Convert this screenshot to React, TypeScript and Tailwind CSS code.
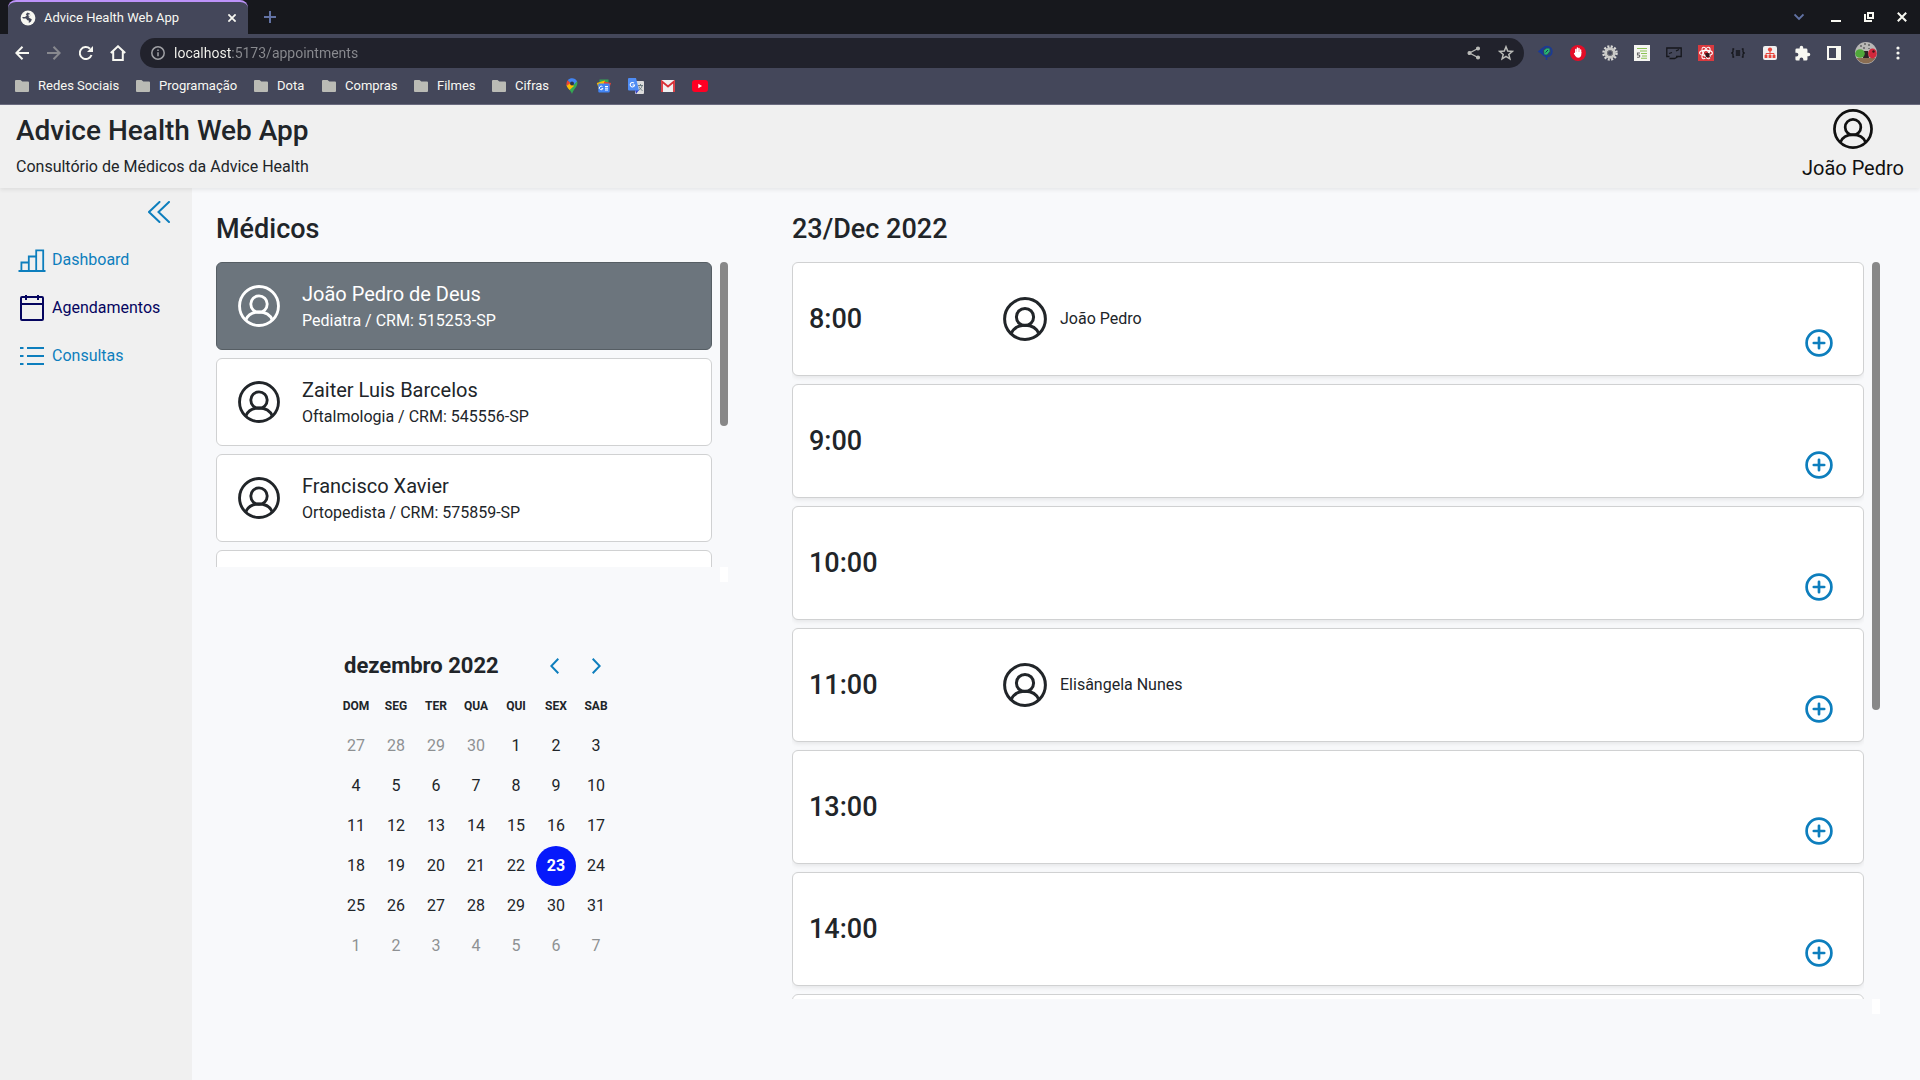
import React from "react";

type SvgProps = { className?: string };

function UserIcon({ className }: SvgProps) {
  return (
    <svg viewBox="0 0 44 44" fill="none" stroke="currentColor" strokeWidth="3" className={className} aria-hidden="true">
      <circle cx="22" cy="22" r="20.4" />
      <circle cx="22" cy="20" r="8.6" />
      <path d="M8 36.8C10.2 31.4 15.6 28.3 22 28.3s11.8 3.1 14 8.5" />
    </svg>
  );
}

function PlusCircleIcon({ className }: SvgProps) {
  return (
    <svg viewBox="0 0 28 28" fill="none" stroke="currentColor" strokeWidth="2.7" strokeLinecap="round" className={className} aria-hidden="true">
      <circle cx="14" cy="14" r="12.4" />
      <path d="M14 8.8v10.4M8.8 14h10.4" />
    </svg>
  );
}

function BarsIcon() {
  return (
    <svg viewBox="0 0 28 28" width="28" height="28" fill="none" stroke="currentColor" strokeWidth="1.8" aria-hidden="true">
      <path d="M.5 25h27M3.4 25v-8.5h7.4M10.8 25V10.5h7.400M18.2 25V4.4h7V25" />
    </svg>
  );
}

function CalendarIcon() {
  return (
    <svg viewBox="0 0 28 28" width="28" height="28" fill="none" stroke="currentColor" strokeWidth="2" aria-hidden="true">
      <rect x="3" y="3" width="22" height="23" rx="1" />
      <path d="M3 10h22M8 1v5M20 1v5" />
    </svg>
  );
}

function ListIcon() {
  return (
    <svg viewBox="0 0 28 28" width="28" height="28" fill="none" stroke="currentColor" strokeWidth="2" aria-hidden="true">
      <path d="M2 6h3.500M9 6h17M2 14h3.500M9 14h17M2 22h3.500M9 22h17" />
    </svg>
  );
}

function Folder() {
  return (
    <svg viewBox="0 0 14 12" width="14" height="12" fill="#babbb5" aria-hidden="true">
      <path d="M1 0h4.500l1.800 1.600H13a1 1 0 0 1 1 1V11a1 1 0 0 1-1 1H1a1 1 0 0 1-1-1V1a1 1 0 0 1 1-1z" />
    </svg>
  );
}

function ChromeIcon({ label, children }: { label: string; children: React.ReactNode }) {
  return (
    <button type="button" aria-label={label} className="flex size-8 items-center justify-center">
      {children}
    </button>
  );
}

function TabStrip() {
  return (
    <div className="flex h-[34px] items-stretch bg-[#17181d] px-2">
      <div className="flex w-60 items-center rounded-t-lg border-t-2 border-[#bd93f9] bg-[#44475a] pl-3 pr-2">
        <svg viewBox="0 0 16 16" width="16" height="16" className="shrink-0" aria-hidden="true">
          <circle cx="8" cy="8" r="7.4" fill="#f8f8f2" />
          <path d="M7.500 2.500 5.800 4.200 6.800 5.400 5 7H2.200l.8 1.500h3l1.300 1.800 1.500.3V13l2.200-1.500.8-2.300L9.500 8l-1-1 2-1.200L9.800 3.500z" fill="#44475a" />
          <path d="M8.500 4.300h2.200v2H8.500z" fill="#f8f8f2" />
        </svg>
        <span className="grow pl-2 text-[13px] text-[#f8f8f2]">Advice Health Web App</span>
        <button type="button" aria-label="Fechar aba" className="flex size-4 items-center justify-center text-[#f8f8f2]">
          <svg viewBox="0 0 8 8" width="8" height="8" stroke="currentColor" strokeWidth="1.8" aria-hidden="true">
            <path d="m.4.4 7.200 7.200M7.600.4.4 7.600" />
          </svg>
        </button>
      </div>
      <button type="button" aria-label="Nova aba" className="ml-4 text-[#6272a4]">
        <svg viewBox="0 0 12 12" width="12" height="12" stroke="currentColor" strokeWidth="2" aria-hidden="true">
          <path d="M6 0v12M0 6h12" />
        </svg>
      </button>
      <div className="ml-auto flex items-center gap-[23px] text-[#f8f8f2]">
        <button type="button" aria-label="Pesquisar abas" className="text-[#6272a4]">
          <svg viewBox="0 0 10 10" width="10" height="10" fill="none" stroke="currentColor" strokeWidth="1.8" aria-hidden="true">
            <path d="m.5 2.500 4.500 4.500 4.500-4.500" />
          </svg>
        </button>
        <button type="button" aria-label="Minimizar" className="pl-1">
          <svg viewBox="0 0 10 10" width="10" height="10" aria-hidden="true">
            <path d="M0 8h10v2H0z" fill="currentColor" />
          </svg>
        </button>
        <button type="button" aria-label="Restaurar">
          <svg viewBox="0 0 10 10" width="10" height="10" fill="none" stroke="currentColor" strokeWidth="2" aria-hidden="true">
            <path d="M4 1h5v5H4zM1 2v7h7" />
          </svg>
        </button>
        <button type="button" aria-label="Fechar janela" className="pr-[5px]">
          <svg viewBox="0 0 10 10" width="10" height="10" stroke="currentColor" strokeWidth="2" aria-hidden="true">
            <path d="m.8.8 8.400 8.400M9.200.8.8 9.200" />
          </svg>
        </button>
      </div>
    </div>
  );
}

function Toolbar() {
  return (
    <div className="flex h-[38px] items-center px-[6px] text-[#f8f8f2]">
      <ChromeIcon label="Voltar">
        <svg viewBox="0 0 14 14" width="14" height="14" fill="none" stroke="currentColor" strokeWidth="2" aria-hidden="true">
          <path d="M14 7H1.500M7.500.7 1.300 7l6.200 6.300" />
        </svg>
      </ChromeIcon>
      <ChromeIcon label="Avançar">
        <svg viewBox="0 0 14 14" width="14" height="14" fill="none" stroke="#88898f" strokeWidth="2" aria-hidden="true">
          <path d="M0 7h12.500M6.500.7 12.700 7l-6.200 6.300" />
        </svg>
      </ChromeIcon>
      <ChromeIcon label="Recarregar">
        <svg viewBox="0 0 14 14" width="14" height="14" fill="none" stroke="currentColor" strokeWidth="2" aria-hidden="true">
          <path d="M12.500 9A6 6 0 1 1 11 2.700" />
          <path d="M14 0v6H8z" fill="currentColor" stroke="none" />
        </svg>
      </ChromeIcon>
      <ChromeIcon label="Página inicial">
        <svg viewBox="0 0 16 16" width="16" height="16" fill="none" stroke="currentColor" strokeWidth="2" aria-hidden="true">
          <path d="M.8 8 8 1.300 15.200 8M3.200 6.500V15h9.600V6.500" />
        </svg>
      </ChromeIcon>
      <div className="mx-[6px] flex h-[30px] grow items-center rounded-full bg-[#21222c] pl-[11px] pr-[2px]">
        <svg viewBox="0 0 14 14" width="14" height="14" fill="none" stroke="#a0a1a5" strokeWidth="1.5" aria-hidden="true">
          <circle cx="7" cy="7" r="6.200" />
          <path d="M7 6.200v4M7 3.400V5" />
        </svg>
        <input
          type="text"
          aria-label="Endereço"
          defaultValue="localhost:5173/appointments"
          className="ml-[9px] grow bg-[linear-gradient(to_right,#f8f8f2_58px,#8a8b90_58px)] bg-clip-text text-[14px] text-transparent outline-none"
        />
        <ChromeIcon label="Compartilhar">
          <svg viewBox="0 0 14 14" width="14" height="14" fill="#babbb8" stroke="#babbb8" strokeWidth="1.3" aria-hidden="true">
            <path d="M11 2.500 2.500 7l8.500 4.500" fill="none" />
            <circle cx="11" cy="2.500" r="1.400" />
            <circle cx="2.500" cy="7" r="1.400" />
            <circle cx="11" cy="11.500" r="1.400" />
          </svg>
        </ChromeIcon>
        <ChromeIcon label="Favoritar">
          <svg viewBox="0 0 16 16" width="16" height="16" fill="none" stroke="#babbb8" strokeWidth="1.5" aria-hidden="true">
            <path d="m8 1.800 1.700 4.300 4.600.3-3.500 3 1.100 4.500L8 11.400l-3.900 2.500 1.100-4.500-3.500-3 4.600-.3z" />
          </svg>
        </ChromeIcon>
      </div>
      <ChromeIcon label="Extensão de inspeção">
        <svg viewBox="0 0 16 16" width="16" height="16" aria-hidden="true">
          <path d="M1 6.500 4 4l1 5zM8.500 11v4" fill="#183a9b" stroke="#183a9b" strokeWidth="1.5" />
          <circle cx="9" cy="6.500" r="5" fill="#2c4468" stroke="#183a9b" strokeWidth="1.3" />
          <path d="M6 5.500 8.500 3.500h3v3L9 9.500H6.500z" fill="#27b86f" />
          <path d="m7.500 7.500 2.500-2.500" stroke="#15345c" />
        </svg>
      </ChromeIcon>
      <ChromeIcon label="Bloqueador de anúncios">
        <svg viewBox="0 0 16 16" width="16" height="16" aria-hidden="true">
          <circle cx="8" cy="8" r="8" fill="#e40d27" />
          <path d="M5.800 8V4.500M7.400 7.500V3M9 7.500V3.500M10.600 8V5M4.600 8.500l1.400 2" stroke="#fff" strokeWidth="1.4" strokeLinecap="round" />
          <path d="M5.200 7h6.100v2.500c0 2-1.100 3.200-3 3.200-2 0-3.100-1.500-3.100-4z" fill="#fff" />
        </svg>
      </ChromeIcon>
      <ChromeIcon label="Configurações da extensão">
        <svg viewBox="0 0 16 16" width="16" height="16" fill="none" aria-hidden="true">
          <circle cx="8" cy="8" r="6.500" stroke="#d8d8d6" strokeWidth="2.500" strokeDasharray="2 1.400" />
          <circle cx="8" cy="8" r="4.300" stroke="#c9c9c7" strokeWidth="3" />
          <circle cx="8" cy="8" r="2.500" fill="#44475a" stroke="#77777a" />
        </svg>
      </ChromeIcon>
      <ChromeIcon label="Extensão de código">
        <svg viewBox="0 0 16 16" width="16" height="16" aria-hidden="true">
          <path d="M0 0h16v16H0z" fill="#f5f5f2" />
          <path d="M3 3.500h10M6 6h7M7 8.500h6M8 11h5M7 13.200h6" stroke="#8cc152" strokeWidth="1.1" />
          <path d="M6 8H3.500v2H5c1 0 1 2.200 0 2.200H3" fill="none" stroke="#666" strokeWidth="1.1" />
        </svg>
      </ChromeIcon>
      <ChromeIcon label="Gravador de tela">
        <svg viewBox="0 0 16 16" width="16" height="16" fill="none" stroke="#15161b" strokeWidth="1.3" aria-hidden="true">
          <path d="M3.500 11.500H.8V3h14.400v8.500H10M3 8.500l3-1M10 6l3-1.500M3.500 13.500h5l3-1.500" />
        </svg>
      </ChromeIcon>
      <ChromeIcon label="Ferramentas do React">
        <svg viewBox="0 0 16 16" width="16" height="16" fill="none" stroke="#fff" strokeWidth="1.1" aria-hidden="true">
          <path d="M0 0h16v16H0z" fill="#da3a3f" stroke="none" />
          <ellipse cx="8" cy="8" rx="6.400" ry="2.600" />
          <ellipse cx="8" cy="8" rx="6.400" ry="2.600" transform="rotate(60 8 8)" />
          <ellipse cx="8" cy="8" rx="6.400" ry="2.600" transform="rotate(120 8 8)" />
          <circle cx="9.500" cy="10" r="2.200" fill="#33161a" stroke="none" />
          <path d="m6.500 8 6 4.500M12.500 8l-5.500 5" stroke="#33161a" strokeWidth=".8" />
        </svg>
      </ChromeIcon>
      <ChromeIcon label="Formatador JSON">
        <svg viewBox="0 0 14 10" width="14" height="10" fill="none" stroke="#15161b" strokeWidth="1.3" aria-hidden="true">
          <path d="M3.200 1H2v3L.8 5 2 6v3h1.200M10.800 1H12v3l1.200 1L12 6v3h-1.200M4.800 3h4.400M4.800 5h4.400M4.800 7h4.400" />
        </svg>
      </ChromeIcon>
      <ChromeIcon label="Mapa do site">
        <svg viewBox="0 0 14 14" width="14" height="14" aria-hidden="true">
          <rect width="14" height="14" rx="2" fill="#f1efef" />
          <path d="M7 3v7M3 10V7.500h8V10" stroke="#e8453c" fill="none" />
          <circle cx="7" cy="3.600" r="2.100" fill="#e8453c" />
          <path d="M1.600 9h2.800v3H1.600zM5.600 9h2.800v3H5.600zM9.600 9h2.800v3H9.600z" fill="#e8453c" />
        </svg>
      </ChromeIcon>
      <ChromeIcon label="Extensões">
        <svg viewBox="0 0 24 24" width="17" height="17" fill="currentColor" aria-hidden="true">
          <path d="M20.500 11H19V7a2 2 0 0 0-2-2h-4V3.500a2.500 2.500 0 0 0-5 0V5H4a2 2 0 0 0-2 2v3.800h1.500a2.700 2.700 0 0 1 0 5.400H2V20a2 2 0 0 0 2 2h3.800v-1.500a2.700 2.700 0 0 1 5.400 0V22H17a2 2 0 0 0 2-2v-4h1.500a2.500 2.500 0 0 0 0-5z" />
        </svg>
      </ChromeIcon>
      <ChromeIcon label="Painel lateral">
        <svg viewBox="0 0 14 14" width="14" height="14" fill="currentColor" aria-hidden="true">
          <path fillRule="evenodd" d="M0 0h14v14H0zM2 2v10h7V2z" />
        </svg>
      </ChromeIcon>
      <ChromeIcon label="Perfil">
        <svg viewBox="0 0 22 22" width="22" height="22" aria-hidden="true">
          <circle cx="11" cy="11" r="11" fill="#b9b8b6" />
          <path d="M1.500 16h19a11 11 0 0 1-19 0z" fill="#8a6d52" />
          <path d="M5 3h2v2H5zM9 1h2v2H9zM13 2h2v2h-2zM8 5h2v2H8zM13 6h2v1h-2z" fill="#777" />
          <path d="M9 9h4l1 7H8z" fill="#2b2326" />
          <ellipse cx="5" cy="11.500" rx="4.800" ry="4.300" fill="#50a83a" />
          <ellipse cx="17.500" cy="11.500" rx="4.300" ry="5" fill="#d3283c" />
          <circle cx="18.500" cy="9.500" r="1.200" fill="#40161c" />
        </svg>
      </ChromeIcon>
      <ChromeIcon label="Menu do navegador">
        <svg viewBox="0 0 4 14" width="4" height="14" fill="currentColor" aria-hidden="true">
          <circle cx="2" cy="2" r="1.600" />
          <circle cx="2" cy="7" r="1.600" />
          <circle cx="2" cy="12" r="1.600" />
        </svg>
      </ChromeIcon>
    </div>
  );
}

const bookmarkFolders = [
  { name: "Redes Sociais", width: "w-[121px]" },
  { name: "Programação", width: "w-[118px]" },
  { name: "Dota", width: "w-[68px]" },
  { name: "Compras", width: "w-[92px]" },
  { name: "Filmes", width: "w-[78px]" },
  { name: "Cifras", width: "w-[64px]" },
];

function BookmarkBar() {
  return (
    <nav aria-label="Favoritos" className="flex h-[33px] items-center border-b border-[#6b6c80] pb-1 pl-[15px] text-[13px] text-[#f8f8f2]">
      {bookmarkFolders.map((b) => (
        <a key={b.name} href="#" className={`flex items-center gap-[9px] whitespace-nowrap ${b.width}`}>
          <Folder />
          {b.name}
        </a>
      ))}
      <a href="#" aria-label="Google Maps" className="flex w-8 justify-center">
        <svg viewBox="0 0 12 16" width="12" height="16" aria-hidden="true">
          <path d="M6 16C5 12.500 1 10 .5 6.500L11 3c2 4.500-3.500 8-5 13z" fill="#34a853" />
          <path d="m.6 7 3-3L8 8l-4.500 4C2 10.300.8 9 .6 7z" fill="#fbbc04" />
          <path d="M1.800 2.200 4.500 5 .6 8C.2 5.500.6 3.500 1.800 2.200z" fill="#ea4335" />
          <path d="M1.800 2.200C4.300-.8 9.400-.4 11 3.200L7.500 7 4 4.500z" fill="#4285f4" />
          <circle cx="6" cy="5.500" r="2" fill="#2d3348" />
        </svg>
      </a>
      <a href="#" aria-label="Google Notícias" className="flex w-8 justify-center">
        <svg viewBox="0 0 16 14" width="16" height="14" aria-hidden="true">
          <path d="M3.500.5h9v5h-9z" fill="#34a853" />
          <path d="m.8 4 8-2.500L10 8 3 10z" fill="#fbbc04" />
          <path d="m8 2.500 7 1.500-2 6-5-2z" fill="#ea4335" />
          <rect x="2.300" y="4.500" width="11.400" height="9" rx="1" fill="#4285f4" />
          <path d="M6.500 7.700a1.800 1.800 0 1 0 .4 1.800H5.500M9 7.500h3M9 9.200h3M9 11h3" fill="none" stroke="#fff" />
        </svg>
      </a>
      <a href="#" aria-label="Google Tradutor" className="flex w-8 justify-center">
        <svg viewBox="0 0 16 16" width="16" height="16" aria-hidden="true">
          <rect x="7" y="3" width="9" height="13" rx="1" fill="#dcdcdc" />
          <path d="M10 7.500h5M12.500 6v1.500M14 8c-.5 2-2 3.500-4 4.500M11 8.500c.5 1.800 1.800 3 3.500 4" fill="none" stroke="#6b7a80" />
          <path d="M7 12h4l-3 4z" fill="#3640c4" />
          <path d="M1 0h7l3 12.500H1a1 1 0 0 1-1-1V1a1 1 0 0 1 1-1z" fill="#4f8df5" />
          <path d="M6 5.200A2.200 2.200 0 1 0 6.600 7H4.500" fill="none" stroke="#fff" strokeWidth="1.1" />
        </svg>
      </a>
      <a href="#" aria-label="Gmail" className="flex w-8 justify-center">
        <svg viewBox="0 0 14 12" width="14" height="12" aria-hidden="true">
          <rect width="14" height="12" rx="1" fill="#f0f0f0" />
          <path d="M1 12V1.500l6 5 6-5V12" fill="none" stroke="#d93036" strokeWidth="1.800" />
        </svg>
      </a>
      <a href="#" aria-label="YouTube" className="flex w-8 justify-center">
        <svg viewBox="0 0 16 12" width="16" height="12" aria-hidden="true">
          <rect width="16" height="12" rx="3" fill="#ff0023" />
          <path d="m6.300 3.800 3.800 2.200-3.800 2.200z" fill="#fff" />
        </svg>
      </a>
    </nav>
  );
}

function AppHeader() {
  return (
    <header className="relative z-10 flex h-[83px] items-start justify-between bg-[#f0f0f0] px-4 shadow-[0_2px_4px_rgba(0,0,0,0.075)]">
      <div className="pt-[9px]">
        <h1 className="text-[28px] leading-[34px] font-medium">Advice Health Web App</h1>
        <p className="pt-[7px] leading-6">Consultório de Médicos da Advice Health</p>
      </div>
      <button type="button" className="flex flex-col items-center pt-1 text-[#111]">
        <UserIcon className="size-10" />
        <span className="pt-1 text-[20px] leading-[30px]">João Pedro</span>
      </button>
    </header>
  );
}

const navItems = [
  { label: "Dashboard", icon: <BarsIcon />, active: false },
  { label: "Agendamentos", icon: <CalendarIcon />, active: true },
  { label: "Consultas", icon: <ListIcon />, active: false },
];

function Sidebar() {
  return (
    <aside className="w-48 shrink-0 bg-[#f0f0f0] text-[#0d7ebd]">
      <div className="flex justify-end pt-3 pr-[21px]">
        <button type="button" aria-label="Recolher menu" className="flex size-6 items-center justify-center">
          <svg viewBox="0 0 22 22" width="22" height="22" fill="none" stroke="currentColor" strokeWidth="2" strokeLinecap="round" aria-hidden="true">
            <path d="M11.500 1 1 11l10.500 10M21 1 10.500 11 21 21" />
          </svg>
        </button>
      </div>
      <nav aria-label="Menu principal" className="flex flex-col gap-5 pt-[22px] pl-[18px]">
        {navItems.map((n) => (
          <a
            key={n.label}
            href="#"
            aria-current={n.active ? "page" : undefined}
            className={n.active ? "flex items-center gap-[6px] text-[#05055f]" : "flex items-center gap-[6px]"}
          >
            {n.icon}
            <span className="leading-6">{n.label}</span>
          </a>
        ))}
      </nav>
    </aside>
  );
}

const doctors = [
  { name: "João Pedro de Deus", info: "Pediatra / CRM: 515253-SP", selected: true },
  { name: "Zaiter Luis Barcelos", info: "Oftalmologia / CRM: 545556-SP", selected: false },
  { name: "Francisco Xavier", info: "Ortopedista / CRM: 575859-SP", selected: false },
];

function ScrollTrack({ thumb }: { thumb: string }) {
  return (
    <div className="flex w-2 shrink-0 flex-col justify-between" aria-hidden="true">
      <div className={`rounded-full bg-[#888] ${thumb}`} />
      <div className="h-[15px] bg-white" />
    </div>
  );
}

function Doctors() {
  return (
    <section>
      <h2 className="text-[27px] leading-[34px] font-medium">Médicos</h2>
      <div className="mt-4 flex h-80 gap-2">
        <div className="flex h-[305px] grow flex-col gap-2 overflow-hidden">
          {doctors.map((d) => (
            <button
              key={d.name}
              type="button"
              aria-pressed={d.selected}
              className={
                d.selected
                  ? "flex h-[88px] shrink-0 items-center gap-[22px] rounded-md border border-[#565e64] bg-[#6c757d] pl-[21px] text-left text-white"
                  : "flex h-[88px] shrink-0 items-center gap-[22px] rounded-md border border-[#d0d1d2] bg-white pl-[21px] text-left"
              }
            >
              <UserIcon className="size-[42px]" />
              <span className="flex flex-col">
                <span className="text-[20px] leading-[30px]">{d.name}</span>
                <span className="leading-6">{d.info}</span>
              </span>
            </button>
          ))}
          <div className="h-[88px] shrink-0 rounded-md border border-[#d0d1d2] bg-white" />
        </div>
        <ScrollTrack thumb="h-[164px]" />
      </div>
    </section>
  );
}

const weekdays = ["DOM", "SEG", "TER", "QUA", "QUI", "SEX", "SAB"];
const weeks = [
  [27, 28, 29, 30, 1, 2, 3],
  [4, 5, 6, 7, 8, 9, 10],
  [11, 12, 13, 14, 15, 16, 17],
  [18, 19, 20, 21, 22, 23, 24],
  [25, 26, 27, 28, 29, 30, 31],
  [1, 2, 3, 4, 5, 6, 7],
];

function dayClass(week: number, day: number) {
  if ((week === 0 && day > 7) || week === 5) return "size-10 rounded-full text-[#8e9193]";
  if (day === 23) return "size-10 rounded-full bg-[#0619fb] font-bold text-white";
  return "size-10 rounded-full";
}

function Calendar() {
  return (
    <section aria-label="Calendário" className="flex justify-center pt-16 pl-2">
      <div className="w-[280px]">
        <div className="flex h-10 items-center">
          <h3 className="grow pl-2 text-[22px] leading-7 font-bold">dezembro 2022</h3>
          <button type="button" aria-label="Mês anterior" className="flex size-10 items-center justify-center text-[#0d7ebd]">
            <svg viewBox="0 0 9 16" width="9" height="16" fill="none" stroke="currentColor" strokeWidth="2" aria-hidden="true">
              <path d="M8.300.8 1.300 8l7 7.200" />
            </svg>
          </button>
          <button type="button" aria-label="Próximo mês" className="ml-[2px] flex size-10 items-center justify-center text-[#0d7ebd]">
            <svg viewBox="0 0 9 16" width="9" height="16" fill="none" stroke="currentColor" strokeWidth="2" aria-hidden="true">
              <path d="m.7.8 7 7.200-7 7.200" />
            </svg>
          </button>
        </div>
        <table className="w-full table-fixed border-collapse text-center">
          <thead>
            <tr className="h-10">
              {weekdays.map((d) => (
                <th key={d} scope="col" className="p-0 text-[12px] font-bold">
                  {d}
                </th>
              ))}
            </tr>
          </thead>
          <tbody>
            {weeks.map((w, i) => (
              <tr key={i}>
                {w.map((d) => (
                  <td key={d} className="h-10 p-0">
                    <button type="button" className={dayClass(i, d)}>
                      {d}
                    </button>
                  </td>
                ))}
              </tr>
            ))}
          </tbody>
        </table>
      </div>
    </section>
  );
}

const slots = [
  { time: "8:00", patient: "João Pedro" },
  { time: "9:00", patient: "" },
  { time: "10:00", patient: "" },
  { time: "11:00", patient: "Elisângela Nunes" },
  { time: "13:00", patient: "" },
  { time: "14:00", patient: "" },
];

function Schedule() {
  return (
    <section>
      <h2 className="text-[27px] leading-[34px] font-medium">23/Dec 2022</h2>
      <div className="mt-4 flex h-[752px] gap-2">
        <ul className="flex h-[737px] grow flex-col gap-2 overflow-hidden">
          {slots.map((s) => (
            <li
              key={s.time}
              className="flex h-[114px] shrink-0 items-center rounded-md border border-[#d0d1d2] bg-white px-4 shadow-[0_2px_4px_rgba(0,0,0,0.075)]"
            >
              <span className="w-[194px] text-[27px] leading-[34px] font-medium">{s.time}</span>
              {s.patient && (
                <span className="flex items-center gap-[13px]">
                  <UserIcon className="size-11" />
                  <span className="leading-6">{s.patient}</span>
                </span>
              )}
              <button type="button" aria-label={`Agendar às ${s.time}`} className="mr-[14px] mb-[18px] ml-auto self-end text-[#0d7ebd]">
                <PlusCircleIcon className="size-7" />
              </button>
            </li>
          ))}
          <li className="h-[114px] shrink-0 rounded-md border border-[#d0d1d2] bg-white" />
        </ul>
        <ScrollTrack thumb="h-[448px]" />
      </div>
    </section>
  );
}

export default function App() {
  return (
    <div className="flex min-h-screen flex-col bg-[#f8f9fb] font-[Roboto,'Noto_Sans',sans-serif] text-[16px] text-[#212529]">
      <div className="bg-[#44475a]">
        <TabStrip />
        <Toolbar />
        <BookmarkBar />
      </div>
      <AppHeader />
      <div className="flex grow">
        <Sidebar />
        <main className="grid grow grid-cols-[8fr_17fr] gap-16 pt-6 pr-10 pl-6">
          <div>
            <Doctors />
            <Calendar />
          </div>
          <Schedule />
        </main>
      </div>
    </div>
  );
}
